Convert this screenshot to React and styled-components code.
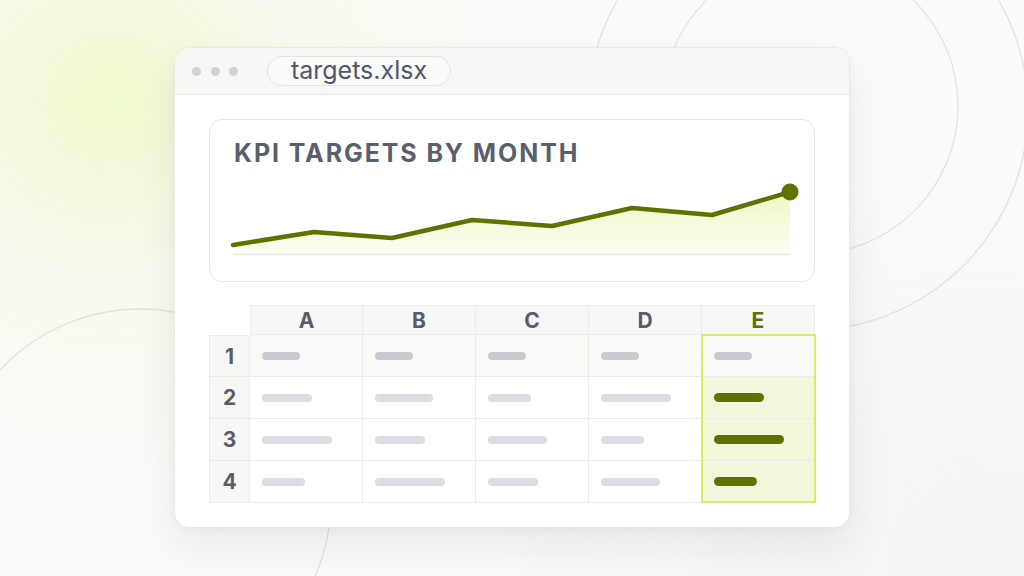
import React from 'react'
import styled, { createGlobalStyle } from 'styled-components'

const GlobalStyle = createGlobalStyle`
    html, body {
        margin: 0;
        padding: 0;
        overflow: hidden;
    }
    body {
        font-family: Inter, "Noto Sans", "Liberation Sans", sans-serif;
    }
`

const Stage = styled.div`
    position: relative;
    width: 1024px;
    height: 576px;
    box-sizing: border-box;
    padding: 47px 0 0 174px;
    overflow: hidden;
    background:
        radial-gradient(ellipse 430px 400px at 110px 100px, rgba(239, 249, 204, 0.95) 0%, rgba(246, 250, 232, 0.6) 45%, rgba(250, 250, 250, 0) 100%),
        radial-gradient(ellipse 500px 400px at 1000px 560px, #f3f4f6 0%, rgba(250, 250, 250, 0) 100%),
        #fafafa;
`

const Rings = styled.svg`
    position: absolute;
    inset: 0;
    width: 1024px;
    height: 576px;
    pointer-events: none;
`

const Window = styled.div`
    position: relative;
    width: 676px;
    box-sizing: border-box;
    background: #ffffff;
    border: 1px solid #e9e9e6;
    border-radius: 15px;
    overflow: hidden;
    box-shadow: 0 20px 44px rgba(30, 30, 30, 0.07), 0 2px 8px rgba(0, 0, 0, 0.03);
`

const TitleBar = styled.div`
    display: flex;
    align-items: center;
    height: 46px;
    padding-left: 17px;
    background: #f7f7f5;
    border-bottom: 1px solid #e7e7e4;
`

const Dots = styled.div`
    display: flex;
    gap: 9.5px;
    margin-right: 29px;
`

const Dot = styled.span`
    width: 9px;
    height: 9px;
    border-radius: 50%;
    background: #d2d3d8;
`

const FilePill = styled.div`
    display: flex;
    align-items: center;
    justify-content: center;
    width: 184px;
    height: 30px;
    box-sizing: border-box;
    border: 1px solid #e3e3e0;
    border-radius: 15px;
    background: #fafaf9;
    font-size: 25px;
    line-height: 1;
    color: #525867;
    padding-bottom: 2px;
`

const Content = styled.div`
    padding: 24px 34px 24px;
`

const ChartCard = styled.div`
    height: 163px;
    box-sizing: border-box;
    border: 1px solid #e6e6e3;
    border-radius: 13px;
    background: #ffffff;
`

const ChartTitle = styled.h1`
    margin: 0;
    padding: 17px 24px 0;
    height: 50px;
    box-sizing: border-box;
    font-size: 25px;
    line-height: 32px;
    font-weight: 700;
    letter-spacing: 1.9px;
    color: #5a5f6c;
`

const ChartSvg = styled.svg`
    display: block;
    width: 604px;
    height: 111px;
`

const Sheet = styled.div`
    display: grid;
    grid-template-columns: 41px repeat(5, 113px);
    grid-template-rows: 30px repeat(4, 42px);
    margin-top: 23px;
`

const HeadCell = styled.div`
    grid-column: ${({ $col }) => $col};
    grid-row: ${({ $row }) => $row};
    display: flex;
    align-items: center;
    justify-content: center;
    box-sizing: border-box;
    border-right: 1px solid #ebebe8;
    border-bottom: 1px solid #ebebe8;
    border-top: ${({ $top }) => ($top ? '1px solid #ebebe8' : 'none')};
    border-left: ${({ $left }) => ($left ? '1px solid #ebebe8' : 'none')};
    background: #f7f7f5;
    font-size: 21px;
    font-weight: 700;
    color: ${({ $active }) => ($active ? '#5f7100' : '#575c6a')};
`

const Cell = styled.div`
    grid-column: ${({ $col }) => $col};
    grid-row: ${({ $row }) => $row};
    display: flex;
    align-items: center;
    padding-left: 12px;
    box-sizing: border-box;
    border-right: 1px solid #ebebe8;
    border-bottom: 1px solid #ebebe8;
    background: ${({ $first, $active }) => ($first ? '#f9f9f8' : $active ? '#f2f8dc' : '#ffffff')};
`

const Selection = styled.div`
    grid-column: 6;
    grid-row: 2 / 6;
    margin: -1px -1px 0 -1px;
    border: 2px solid #d6ee62;
    pointer-events: none;
    z-index: 1;
`

const Bar = styled.div`
    height: ${({ $green }) => ($green ? '9px' : '8px')};
    border-radius: 5px;
    background: ${({ $green, $first }) => ($green ? '#5f7100' : $first ? '#c9cad1' : '#dcdde2')};
`

const columns = ['A', 'B', 'C', 'D', 'E']

const rows = [
    [38, 38, 38, 38, 38],
    [50, 58, 43, 70, 50],
    [70, 50, 59, 43, 70],
    [43, 70, 50, 59, 43],
]

const points = [
    [23, 75], [104, 62], [182, 68], [262, 50],
    [342, 56], [422, 38], [502, 45], [580, 22],
]

function Chart() {
    const line = points.map(([x, y]) => `${x},${y}`).join(' ')
    const area = `M23,84 L${line.replace(/ /g, ' L')} L580,84 Z`

    return (
        <ChartSvg viewBox="0 0 604 111">
            <defs>
                <linearGradient id="areaFill" x1="0" y1="0" x2="0" y2="1">
                    <stop offset="0%" stopColor="#eef8c4" />
                    <stop offset="100%" stopColor="#fbfdf2" />
                </linearGradient>
            </defs>
            <path d={area} fill="url(#areaFill)" />
            <line x1="23" y1="84.5" x2="580" y2="84.5" stroke="#e7e7e4" strokeWidth="1.5" />
            <polyline points={line} fill="none" stroke="#5f7100" strokeWidth="4.5" strokeLinejoin="round" strokeLinecap="round" />
            <circle cx="580" cy="22" r="8.5" fill="#5f7100" />
        </ChartSvg>
    )
}

export default function App() {
    return (
        <Stage>
            <GlobalStyle />
            <Rings viewBox="0 0 1024 576">
                <circle cx="810" cy="106" r="148" fill="none" stroke="#e2e2e0" strokeWidth="1.3" />
                <circle cx="808" cy="110" r="220" fill="none" stroke="#e2e2e0" strokeWidth="1.3" />
                <circle cx="140" cy="500" r="191" fill="none" stroke="#e2e2e0" strokeWidth="1.3" />
            </Rings>
            <Window>
                <TitleBar>
                    <Dots>
                        <Dot />
                        <Dot />
                        <Dot />
                    </Dots>
                    <FilePill>targets.xlsx</FilePill>
                </TitleBar>
                <Content>
                    <ChartCard>
                        <ChartTitle>KPI TARGETS BY MONTH</ChartTitle>
                        <Chart />
                    </ChartCard>
                    <Sheet>
                        {columns.map((c, i) => (
                            <HeadCell key={c} $col={i + 2} $row={1} $top $left={i === 0} $active={c === 'E'}>
                                {c}
                            </HeadCell>
                        ))}
                        {rows.map((widths, r) => (
                            <React.Fragment key={r}>
                                <HeadCell $col={1} $row={r + 2} $left $top={r === 0}>{r + 1}</HeadCell>
                                {widths.map((w, c) => {
                                    const first = r === 0
                                    const active = c === 4
                                    return (
                                        <Cell key={c} $col={c + 2} $row={r + 2} $first={first} $active={active}>
                                            <Bar $first={first} $green={active && !first} style={{ width: w }} />
                                        </Cell>
                                    )
                                })}
                            </React.Fragment>
                        ))}
                        <Selection />
                    </Sheet>
                </Content>
            </Window>
        </Stage>
    )
}
